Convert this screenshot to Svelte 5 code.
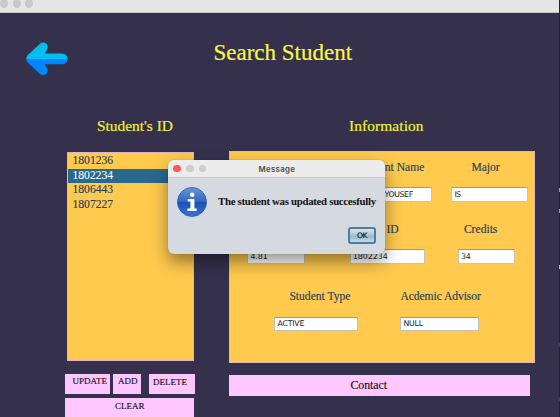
<script>
  const students = ['1801236', '1802234', '1806443', '1807227'];
  const selected = '1802234';
  const rows = [
    [
      { label: 'Student Name', value: 'YOUSEF', cls: 'name' },
      { label: 'Major', value: 'IS', cls: 'major' }
    ],
    [
      { label: '', value: '4.81', cls: 'gpa' },
      { label: 'ID', value: '1802234', cls: 'sid' },
      { label: 'Credits', value: '34', cls: 'credits' }
    ],
    [
      { label: 'Student Type', value: 'ACTIVE', cls: 'type' },
      { label: 'Acdemic Advisor', value: 'NULL', cls: 'advisor' }
    ]
  ];
</script>

<div class="screen">
  <div class="titlebar"><i></i><i></i><i></i></div>
  <header>
    <svg class="back" width="42" height="34" viewBox="0 0 42 34">
      <defs>
        <clipPath id="upper"><rect width="42" height="17" /></clipPath>
        <clipPath id="lower"><rect y="17" width="42" height="17" /></clipPath>
      </defs>
      {#each [['upper', '#00bdf2'], ['lower', '#0085ff']] as [clip, color]}
        <path
          clip-path="url(#{clip})"
          fill={color}
          d="M1.9 13 14 1.700C16 .1 18.700.1 20.400 1.700c1.600 1.600 1.600 4 .6 6L18.900 11.600H36.400a5.200 5.200 0 0 1 0 10.600H18.900l2.100 3.700c1.100 2 .9 4.600-.7 6.100-1.700 1.500-4.500 1.400-6.300-.100L1.900 20.800C-.1 18.600-.1 15.200 1.900 13Z"
        />
      {/each}
    </svg>
    <h1>Search Student</h1>
  </header>
  <main>
    <section class="left">
      <h2>Student's ID</h2>
      <ul>
        {#each students as id}
          <li class:active={id === selected}>{id}</li>
        {/each}
      </ul>
      <div class="buttons">
        <button class="update">UPDATE</button>
        <button class="add">ADD</button>
        <button class="delete">DELETE</button>
      </div>
      <button class="clear">CLEAR</button>
    </section>
    <section class="right">
      <h2>Information</h2>
      <div class="panel">
        {#each rows as row}
          <div class="row">
            {#each row as f}
              <div class="cell {f.cls}">
                <span class="label">{f.label}</span>
                <div class="field">{f.value}</div>
              </div>
            {/each}
          </div>
        {/each}
      </div>
      <button class="contact">Contact</button>
    </section>
  </main>

  <div class="edge"><b></b><b></b><b class="white"></b><b class="red"></b><b class="red"></b></div>

  <div class="dialog">
    <div class="bar"><i class="close"></i><i></i><i></i><span>Message</span></div>
    <div class="message">
      <svg width="30" height="30" viewBox="0 0 30 30">
        <defs>
          <linearGradient id="ball" x2="0" y2="1">
            <stop offset="0" stop-color="#6796db" />
            <stop offset=".48" stop-color="#3267c5" />
            <stop offset=".52" stop-color="#1d51b5" />
            <stop offset="1" stop-color="#3c73d2" />
          </linearGradient>
        </defs>
        <circle cx="15" cy="15" r="14.500" fill="url(#ball)" stroke="#2857aa" stroke-width=".8" />
        <circle cx="15.200" cy="7.700" r="2.300" fill="#fff" />
        <path fill="#fff" d="M10.600 12h6.800v9.600h2.300v2.500H10.300v-2.500h3.100v-7.200h-2.800z" />
      </svg>
      <p>The student was updated succesfully</p>
    </div>
    <button class="ok">OK</button>
  </div>
</div>

<style>
  :global(body) { margin: 0; overflow: hidden; background: #35314d; }
  .screen {
    position: relative; width: 560px; height: 417px; overflow: hidden;
    background: #35314d; font-family: "Liberation Serif", serif; white-space: nowrap;
  }
  .titlebar {
    box-sizing: border-box; width: 559px; height: 13px; background: #e5e5e5;
    border-bottom: 1px solid #c4c2c4; display: flex; gap: 4.500px; overflow: hidden;
  }
  .titlebar i { width: 8px; height: 9px; border-radius: 50%; background: #c9c9c9; margin-top: -1px; }
  header { height: 102px; display: flex; }
  .back { margin: 29px 0 0 26px; }
  h1 { margin: 25px 0 0 145.500px; height: 30px; font: 23px/30px "Liberation Serif", serif; color: #f8f83e; -webkit-text-stroke: .2px #f8f83e; }
  h2 { margin: 0; height: 22px; font: 15.400px/22px "Liberation Serif", serif; color: #f0f03c; -webkit-text-stroke: .2px #f0f03c; }
  main { display: flex; padding-left: 65px; }
  .left { width: 131px; }
  .left h2 { padding-left: 32px; }
  ul {
    box-sizing: border-box; list-style: none; margin: 15px 0 0 2px; width: 127px; height: 209px;
    padding: 1px 0 0; border: 1px solid #dfb5c8; background: #ffca4e;
  }
  li { height: 14.700px; line-height: 14px; padding-left: 4.500px; font-size: 11.600px; color: #233e5e; -webkit-text-stroke: .15px; }
  li.active { background: #29698d; color: #f0f6fa; }
  button {
    display: block; box-sizing: border-box; border: 0; border-radius: 0; background: #fec7fd;
    font: 9px/12px "Liberation Serif", serif; color: #181018; text-align: left; white-space: nowrap;
    -webkit-text-stroke: .15px;
  }
  .buttons { display: flex; margin-top: 13px; height: 20px; }
  .update { width: 45px; padding: 0 0 6px 7.500px; }
  .add { width: 28px; margin-left: 3px; padding: 0 0 6px 5px; }
  .delete { width: 46px; margin-left: 8px; padding: 0 0 4px 4px; }
  .clear { width: 129px; height: 19px; margin-top: 4px; padding: 0 0 3px 50px; }
  .right { margin-left: 33.400px; width: 306px; }
  .right h2 { padding-left: 119.600px; letter-spacing: .1px; }
  .panel {
    box-sizing: border-box; width: 306px; height: 212px; margin-top: 14px;
    border: 1px solid #e2b7bd; background: #ffca4e; padding-top: 8px;
  }
  .row { display: flex; height: 62px; }
  .row:nth-child(2) { height: 67px; }
  .label { display: block; height: 16px; line-height: 16px; font-size: 11.600px; color: #273f5c; -webkit-text-stroke: .15px; }
  .field {
    box-sizing: border-box; height: 15px; margin-top: 11px; padding-left: 2px; background: #fff;
    border: 1px solid #c9c3b6; border-top-color: #969a9e; font: 7.800px/13px "DejaVu Sans", sans-serif; color: #191919;
  }
  .name { width: 83px; margin-left: 119px; }
  .name .label { padding-left: 9px; }
  .name .field { padding-left: 34px; letter-spacing: -.350px; }
  .major { width: 77px; margin-left: 19px; }
  .major .label { padding-left: 20px; }
  .major .field { letter-spacing: -.600px; }
  .gpa { width: 58px; margin-left: 17px; }
  .sid { width: 75px; margin-left: 44.500px; }
  .sid .label { padding-left: 36.500px; }
  .credits { width: 57px; margin-left: 33px; }
  .credits .label { padding-left: 6px; }
  .type { width: 84px; margin-left: 44px; }
  .type .label { padding-left: 15px; }
  .type .field, .advisor .field { height: 14px; line-height: 12px; margin-top: 12px; letter-spacing: -.200px; }
  .advisor { width: 79px; margin-left: 42px; }
  .advisor .label { letter-spacing: -.070px; }
  .contact { width: 301px; height: 21px; margin-top: 12px; padding: 0 0 2px 121px; font-size: 11.800px; }
  .edge {
    position: absolute; left: 559px; top: 0; width: 1px; height: 417px; background: #24232c;
    display: flex; flex-direction: column; padding-top: 188px; box-sizing: border-box;
  }
  .edge b { height: 4px; background: #a9a73d; margin-bottom: 17px; flex: none; }
  .edge b.white { margin: 35px 0 74px; background: #bbb; }
  .edge b.red { background: #8b2138; margin: 0 0 50px; }
  .dialog {
    position: absolute; left: 168px; top: 160px; width: 217px; height: 93.500px; border-radius: 6px;
    overflow: hidden; background: #d5d9e0; box-shadow: 0 0 1px rgba(0,0,0,.35), 0 8px 17px rgba(0,0,0,.42);
  }
  .bar { box-sizing: border-box; height: 18px; background: #ececed; border-bottom: 1px solid #c9cacf; display: flex; align-items: center; padding-left: 5px; gap: 5px; }
  .bar i { width: 7.800px; height: 7.800px; border-radius: 50%; background: #cfcfd0; }
  .bar .close { background: #fa5a55; }
  .bar span { margin-left: 47px; font: 600 7.800px/16px Inter, sans-serif; letter-spacing: .350px; color: #4b4b4b; }
  .message { display: flex; padding: 9px 0 0 9px; }
  p { margin: 6px 0 0 11px; font: bold 10.800px/16px "Liberation Serif", serif; letter-spacing: -.290px; color: #111; }
  .ok {
    width: 28px; height: 17px; margin: 10px 0 0 180px; padding: 0; text-align: center; border-radius: 3px;
    border: 2px solid #4a7fa5; background: linear-gradient(#dce7ef, #a9c0d1 50%, #9bb6ca 55%, #c5d9e6);
    font: 7.500px/13px "DejaVu Sans", sans-serif; letter-spacing: -.500px; color: #111;
  }
</style>
